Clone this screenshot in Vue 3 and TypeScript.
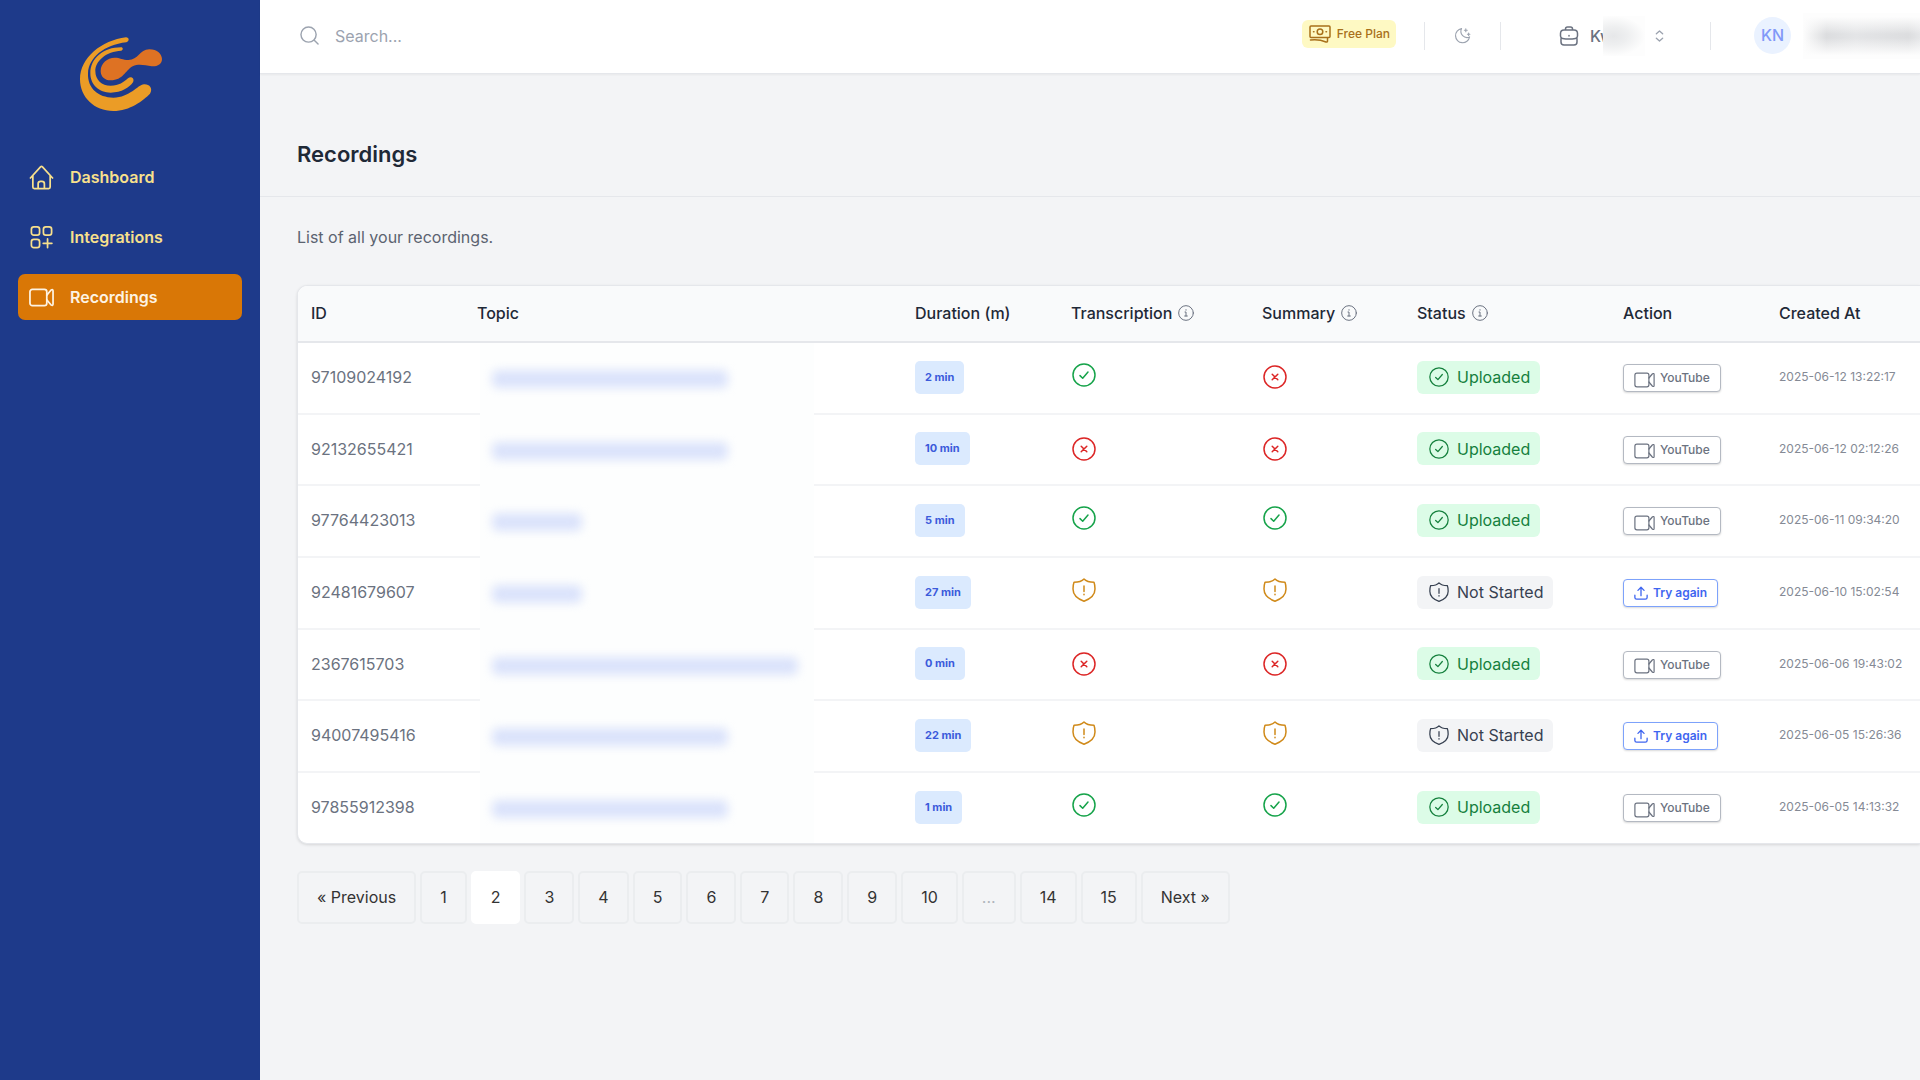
<script setup lang="ts">
type Check = 'yes' | 'no' | 'pending'

interface Recording {
  id: string
  topic: number
  minutes: number
  transcription: Check
  summary: Check
  uploaded: boolean
  created: string
}

const recordings: Recording[] = [
  { id: '97109024192', topic: 236, minutes: 2, transcription: 'yes', summary: 'no', uploaded: true, created: '2025-06-12 13:22:17' },
  { id: '92132655421', topic: 236, minutes: 10, transcription: 'no', summary: 'no', uploaded: true, created: '2025-06-12 02:12:26' },
  { id: '97764423013', topic: 90, minutes: 5, transcription: 'yes', summary: 'yes', uploaded: true, created: '2025-06-11 09:34:20' },
  { id: '92481679607', topic: 90, minutes: 27, transcription: 'pending', summary: 'pending', uploaded: false, created: '2025-06-10 15:02:54' },
  { id: '2367615703', topic: 306, minutes: 0, transcription: 'no', summary: 'no', uploaded: true, created: '2025-06-06 19:43:02' },
  { id: '94007495416', topic: 236, minutes: 22, transcription: 'pending', summary: 'pending', uploaded: false, created: '2025-06-05 15:26:36' },
  { id: '97855912398', topic: 236, minutes: 1, transcription: 'yes', summary: 'yes', uploaded: true, created: '2025-06-05 14:13:32' },
]

const columns = [
  { key: 'id', label: 'ID', info: false },
  { key: 'topic', label: 'Topic', info: false },
  { key: 'duration', label: 'Duration (m)', info: false },
  { key: 'transcription', label: 'Transcription', info: true },
  { key: 'summary', label: 'Summary', info: true },
  { key: 'status', label: 'Status', info: true },
  { key: 'action', label: 'Action', info: false },
  { key: 'created', label: 'Created At', info: false },
]

const checks = ['transcription', 'summary'] as const
const checkLabels: Record<Check, string> = { yes: 'Available', no: 'Unavailable', pending: 'Pending' }

const pages = ['« Previous', '1', '2', '3', '4', '5', '6', '7', '8', '9', '10', '...', '14', '15', 'Next »']
const currentPage = '2'
</script>

<template>
  <div class="app">
    <svg class="sprite" aria-hidden="true">
      <symbol id="i-check" viewBox="0 0 24 24"><circle cx="12" cy="12" r="11" /><path d="M8 12.6 10.7 15.2 16 9" /></symbol>
      <symbol id="i-cross" viewBox="0 0 24 24"><circle cx="12" cy="12" r="11" /><path d="m9.2 9.2 5.6 5.6m0-5.6-5.6 5.6" /></symbol>
      <symbol id="i-shield" viewBox="0 0 24 24"><path d="M12 1C9.600 3.600 6 4.300 2 4.300C1 7 1 9 1 11C1 17 6 21 12 23.200C18 21 23 17 23 11C23 9 23 7 22 4.300C18 4.300 14.400 3.600 12 1Z" /><path d="M12 8v5.500M12 16.200v.6" /></symbol>
      <symbol id="i-info" viewBox="0 0 24 24"><circle cx="12" cy="12" r="11" /><path d="M10.500 10.500H12V16.500M10 16.500h4M12 7v.8" /></symbol>
      <symbol id="i-video" viewBox="0 0 26 20"><rect x="1" y="1.500" width="17.500" height="17" rx="2.500" /><path d="m18.500 7.500 4.500-5.300q2-1 2 1v13.600q0 2-2 1l-4.500-5.300" /></symbol>
      <symbol id="i-upload" viewBox="0 0 16 16"><path d="M1 10.500v2.500q0 2 2 2h10q2 0 2-2v-2.500M8 11V1.500M4.500 5 8 1.500 11.500 5" /></symbol>
    </svg>

    <aside class="sidebar">
      <a class="logo" href="#" aria-label="Home">
        <svg viewBox="0 0 300 300">
          <path fill="#eb9c26" d="M168 37C95 46 30 98 30 163C30 217 73 258 130 258C180 258 220 226 240 206C250 190 238 177 222 178C202 180 180 218 130 218C85 218 52 190 54 145C56 98 102 60 169 52C179 49 178 37 168 37Z" />
          <path fill="#eb9c26" d="M153 67C100 67 61 100 61 145C61 180 88 203 122 203C155 203 178 187 189 172C195 160 183 152 174 160C160 172 148 182 122 182C95 182 76 165 76 138C76 108 108 79 154 77C160 75 160 67 153 67Z" />
          <path fill="#de7223" d="M92 138C92 115 112 98 134 98C150 98 158 105 175 105C205 105 208 74 238 73C262 73 276 88 276 102C276 118 262 125 245 124C225 122 208 115 188 124C165 137 160 166 122 166C104 166 92 155 92 138Z" />
        </svg>
      </a>
      <nav class="nav">
        <a href="#">
          <svg viewBox="0 0 26 26"><path d="M1.500 13.500 12 2q1-1 2 0l10.500 11.500M4 11v12q0 1.500 1.500 1.500h15q1.500 0 1.500-1.500V11M9.500 24.500V19.500q0-2.500 2.500-2.500h1.500q2.500 0 2.500 2.500v5" /></svg>
          Dashboard
        </a>
        <a href="#">
          <svg viewBox="0 0 26 26"><rect x="2.500" y="2" width="8.500" height="8.500" rx="2.500" /><rect x="15" y="2" width="8.500" height="8.500" rx="2.500" /><rect x="2.500" y="15" width="8.500" height="8.500" rx="2.500" /><path d="M19.300 14.500v9M14.800 19h9" /></svg>
          Integrations
        </a>
        <a href="#" class="active" aria-current="page">
          <svg viewBox="0 -3 26 26"><use href="#i-video" width="26" height="20" /></svg>
          Recordings
        </a>
      </nav>
    </aside>

    <div class="content">
      <header class="topbar">
        <label class="search">
          <svg viewBox="0 0 20 20" aria-hidden="true"><circle cx="9" cy="9" r="8" /><path d="m15 15 4 4" /></svg>
          <input type="search" placeholder="Search..." aria-label="Search" />
        </label>
        <a class="plan" href="#">
          <svg viewBox="0 0 22 18"><rect x="1" y="1" width="20" height="11.500" rx="1" /><circle cx="11" cy="6.800" r="2.800" /><path d="M4.500 6.800h.5M17 6.800h.5M1.500 15Q10 14 17 17Q18.500 17.300 18.500 16V13" /></svg>
          Free Plan
        </a>
        <span class="rule"></span>
        <button class="theme" aria-label="Toggle theme">
          <svg viewBox="0 0 18 18"><path d="M8 1.700A7.500 7.500 0 1 0 16.500 10.500A6.500 6.500 0 0 1 8 1.700ZM12.500 2v3M11 3.500h3M15.500 6.500v2.500M14.200 7.700h2.600" /></svg>
        </button>
        <span class="rule"></span>
        <button class="team">
          <svg class="bag" viewBox="0 0 20 20"><path d="M6.500 4V3q0-2 2-2h3q2 0 2 2v1M5 4h10q3.500 0 3.500 3.500v2.500q0 2-2 2.400Q10 13.600 3.500 12.400q-2-.4-2-2.400V7.500Q1.500 4 5 4ZM2 12.500v3.500q0 3 3 3h10q3 0 3-3v-3.500M10 9.500v.5" /></svg>
          <span class="team-name">Kw<i class="smudge"></i></span>
          <svg class="updown" viewBox="0 0 10 14"><path d="m1.500 4.500 3.500-3 3.500 3M1.500 9.500l3.500 3 3.500-3" /></svg>
        </button>
        <span class="rule"></span>
        <button class="user" aria-label="Account"><span class="avatar">KN</span><i class="smudge wide"></i></button>
      </header>

      <main>
        <div class="heading"><h1>Recordings</h1></div>
        <div class="body">
          <p>List of all your recordings.</p>
          <div class="card">
            <table>
              <thead>
                <tr>
                  <th v-for="c in columns" :key="c.key" :class="'c-' + c.key" scope="col">
                    <span class="label">{{ c.label }}<svg v-if="c.info" class="info"><use href="#i-info" /></svg></span>
                  </th>
                </tr>
              </thead>
              <tbody>
                <tr v-for="r in recordings" :key="r.id">
                  <td>{{ r.id }}</td>
                  <td class="topic"><a class="redacted" href="#" aria-label="Topic"><i :style="{ width: r.topic + 'px' }"></i></a></td>
                  <td><span class="minutes">{{ r.minutes }} min</span></td>
                  <td v-for="k in checks" :key="k">
                    <svg :class="['mark', r[k]]" role="img" :aria-label="checkLabels[r[k]]">
                      <use :href="r[k] === 'yes' ? '#i-check' : r[k] === 'no' ? '#i-cross' : '#i-shield'" />
                    </svg>
                  </td>
                  <td>
                    <span :class="['status', { done: r.uploaded }]">
                      <svg><use :href="r.uploaded ? '#i-check' : '#i-shield'" /></svg>{{ r.uploaded ? 'Uploaded' : 'Not Started' }}
                    </span>
                  </td>
                  <td>
                    <a v-if="r.uploaded" class="action" href="#"><svg class="cam"><use href="#i-video" /></svg>YouTube</a>
                    <button v-else class="action retry"><svg><use href="#i-upload" /></svg>Try again</button>
                  </td>
                  <td class="created">{{ r.created }}</td>
                </tr>
              </tbody>
            </table>
          </div>
          <nav class="pages" aria-label="Pages">
            <template v-for="p in pages" :key="p">
              <span v-if="p === '...'" class="page gap">{{ p }}</span>
              <a v-else href="#" :class="['page', { current: p === currentPage }]">{{ p }}</a>
            </template>
          </nav>
        </div>
      </main>
    </div>
  </div>
</template>

<style>
body {
  margin: 0;
  background: #f3f4f6;
}
</style>

<style scoped>
* {
  box-sizing: border-box;
}
.app {
  display: flex;
  min-height: 100vh;
  font: 16px/24px Inter, "Liberation Sans", sans-serif;
  color: #6b7280;
  overflow: hidden;
}
a {
  color: inherit;
  text-decoration: none;
}
button {
  font: inherit;
  color: inherit;
  background: none;
  border: 0;
  padding: 0;
}
svg {
  display: block;
  flex: none;
  fill: none;
  stroke: currentColor;
  stroke-width: 1.5;
  stroke-linecap: round;
  stroke-linejoin: round;
}
.sprite {
  position: absolute;
  width: 0;
  height: 0;
}
.sidebar {
  flex: none;
  width: 260px;
  padding: 25px 18px;
  background: #1e3a8a;
}
.logo {
  display: block;
  width: 100px;
  margin-left: 52px;
}
.logo svg {
  width: 100px;
  height: 100px;
  stroke: none;
}
.nav {
  display: flex;
  flex-direction: column;
  gap: 14px;
  margin-top: 29px;
}
.nav a {
  display: flex;
  align-items: center;
  gap: 16px;
  height: 46px;
  padding: 0 11px;
  border-radius: 7px;
  font-weight: 600;
  color: #f8e08c;
}
.nav svg {
  width: 25px;
  height: 25px;
  stroke-width: 1.8;
}
.nav .active {
  background: #d97706;
  color: #fdf3e3;
}
.content {
  flex: 1;
  min-width: 0;
}
.topbar {
  display: flex;
  align-items: center;
  height: 74px;
  padding: 0 0 2px 40px;
  background: #fff;
  border-bottom: 1px solid #e5e7eb;
  box-shadow: 0 1px 2px rgba(0, 0, 0, 0.05);
}
.search {
  flex: 1;
  display: flex;
  align-items: center;
  gap: 16px;
  color: #9ca3af;
}
.search svg {
  width: 19px;
  height: 19px;
}
.search input {
  flex: 1;
  min-width: 0;
  padding: 0;
  border: 0;
  outline: 0;
  background: none;
  font: inherit;
  color: #374151;
}
.search input::placeholder {
  color: #9ca3af;
}
.plan {
  display: flex;
  align-items: center;
  gap: 6px;
  height: 28px;
  margin: 0 28px 4px 0;
  padding: 0 6px 0 7px;
  border-radius: 6px;
  background: #fef9c3;
  color: #a8701a;
  font-size: 12px;
  font-weight: 500;
}
.plan svg {
  width: 22px;
  height: 18px;
}
.rule {
  width: 1px;
  height: 28px;
  background: #e5e7eb;
}
.theme {
  margin: 0 29px;
  color: #9ca3af;
}
.theme svg {
  width: 17px;
  height: 17px;
  stroke-width: 1.2;
}
.team {
  display: flex;
  align-items: center;
  width: 209px;
  padding-left: 58px;
  font-weight: 500;
}
.bag {
  width: 20px;
  height: 20px;
}
.team-name {
  display: flex;
  width: 55px;
  height: 40px;
  margin: 0 10px 0 11px;
  line-height: 40px;
  overflow: hidden;
}
.smudge {
  display: block;
  flex: none;
  width: 42px;
  height: 40px;
  margin-left: -10px;
  background: radial-gradient(ellipse farthest-side at 25% 50%, #e6e7e9, #eeeff0 45%, #fdfdfd);
}
.smudge.wide {
  width: 117px;
  height: 46px;
  margin: 0;
  background: linear-gradient(#fdfdfd 8%, transparent 46%, transparent 54%, #fdfdfd 92%), linear-gradient(90deg, #fdfdfd, #dcdddf 20%, #e4e5e7 45%, #dcdddf 90%, #e6e7e9);
}
.updown {
  width: 9px;
  height: 14px;
  color: #9ca3af;
}
.user {
  display: flex;
  align-items: center;
  gap: 12px;
  padding-left: 43px;
}
.avatar {
  width: 37px;
  height: 37px;
  border-radius: 50%;
  background: #eaf2ff;
  color: #8199f8;
  font-weight: 500;
  line-height: 37px;
  text-align: center;
}
.heading {
  height: 123px;
  padding: 64px 37px 0;
  border-bottom: 1px solid #e5e7eb;
}
h1 {
  margin: 0;
  font-size: 22px;
  line-height: 32px;
  font-weight: 600;
  color: #1f2937;
}
.body {
  padding: 28px 0 24px 37px;
}
p {
  margin: 0 0 36px;
  color: #5b6370;
}
.card {
  border: 1px solid #e5e7eb;
  border-right: 0;
  border-radius: 10px 0 0 10px;
  background: #fff;
  box-shadow: 0 1px 3px rgba(0, 0, 0, 0.12);
  overflow: hidden;
}
table {
  width: 100%;
  table-layout: fixed;
  border-collapse: separate;
  border-spacing: 0;
}
th {
  height: 57px;
  padding: 0 0 2px 13px;
  border-bottom: 2px solid #e5e7eb;
  background: #f9fafb;
  color: #1f2937;
  font-weight: 500;
  text-align: left;
}
.c-id { width: 166px; }
.c-topic { width: 438px; }
.c-duration { width: 156px; }
.c-transcription { width: 191px; }
.c-summary { width: 155px; }
.c-status { width: 206px; }
.c-action { width: 156px; }
.label {
  display: flex;
  align-items: center;
  gap: 6px;
}
.info {
  width: 16px;
  height: 16px;
  color: #6b7280;
}
td {
  height: 72px;
  padding: 0 0 2px 13px;
  border-bottom: 2px solid #f3f4f6;
  vertical-align: middle;
}
tr:nth-child(3n + 2) td {
  height: 71px;
}
tr:last-child td {
  height: 70px;
  border-bottom: 0;
}
.topic {
  position: relative;
}
.redacted {
  position: absolute;
  inset: 0 auto -2px 16px;
  display: flex;
  align-items: center;
  width: 334px;
  padding-left: 12px;
  background: #fdfefe;
}
.redacted i {
  height: 18px;
  border-radius: 6px;
  background: #dbe3fb;
  filter: blur(5px);
}
.minutes {
  display: inline-block;
  height: 33px;
  padding: 0 10px;
  border-radius: 5px;
  background: #dbeafe;
  color: #3b5bdb;
  font-size: 11px;
  font-weight: 700;
  line-height: 33px;
  vertical-align: middle;
}
.mark {
  width: 24px;
  height: 24px;
  margin-left: 1px;
}
.yes {
  margin-bottom: 4px;
  color: #16a34a;
}
.no {
  color: #dc2626;
}
.pending {
  margin-bottom: 4px;
  color: #d08a1a;
}
.status {
  display: inline-flex;
  align-items: center;
  gap: 8px;
  height: 33px;
  padding: 0 10px 0 12px;
  border-radius: 6px;
  background: #f3f4f6;
  color: #374151;
  vertical-align: middle;
}
.status svg {
  width: 20px;
  height: 20px;
}
.status.done {
  background: #dcfce7;
  color: #15803d;
}
.action {
  display: inline-flex;
  align-items: center;
  gap: 5px;
  height: 28px;
  margin-top: 2px;
  padding: 0 10px;
  border: 1px solid #b4b9c2;
  border-radius: 4px;
  background: #fff;
  box-shadow: 0 1px 2px rgba(0, 0, 0, 0.15);
  font-size: 12px;
  font-weight: 500;
  vertical-align: middle;
}
.action svg {
  width: 14px;
  height: 14px;
}
.action .cam {
  width: 21px;
  height: 16px;
  margin-top: 3px;
}
.retry {
  border-color: #7da2fb;
  color: #3f66f0;
  font-weight: 600;
}
.created {
  font-size: 12px;
  color: #858a95;
}
.pages {
  display: flex;
  gap: 4px;
  margin-top: 27px;
}
.page {
  height: 53px;
  padding: 0 18px;
  border: 2px solid #ebedef;
  border-radius: 5px;
  color: #333;
  line-height: 49px;
}
.page.current {
  border-color: #fff;
  background: #fff;
}
.page.gap {
  color: #b0b4bb;
}
</style>
